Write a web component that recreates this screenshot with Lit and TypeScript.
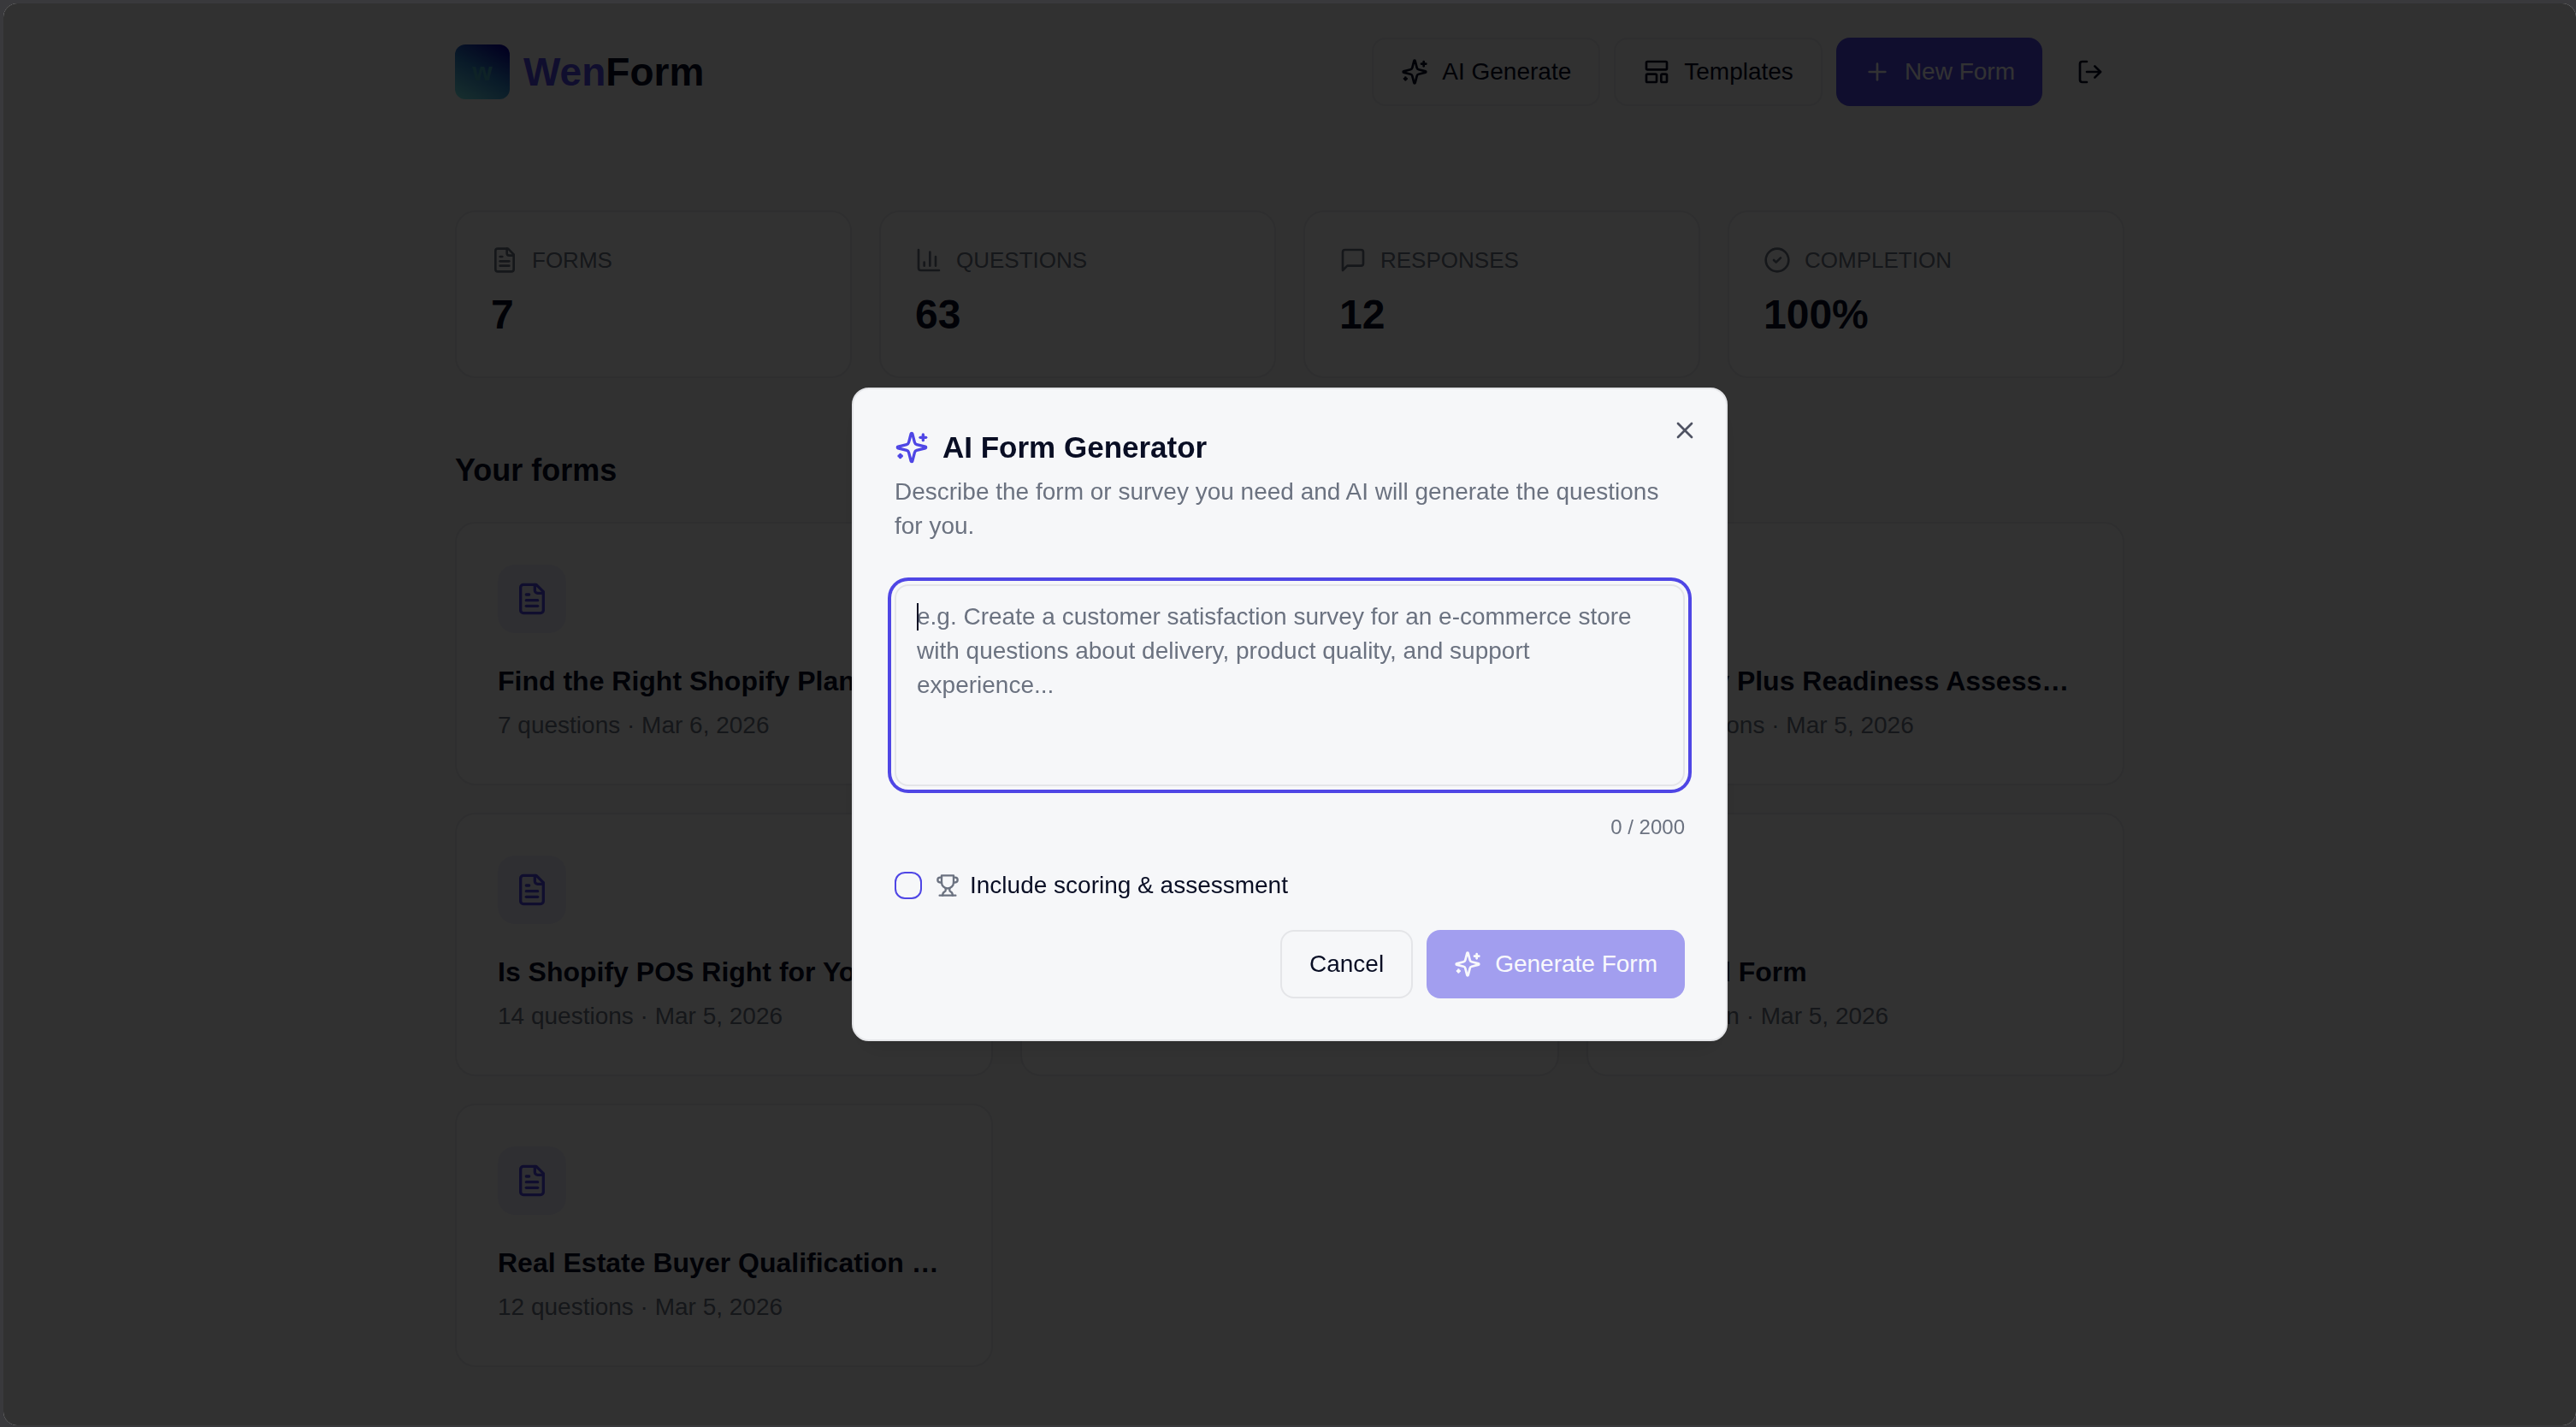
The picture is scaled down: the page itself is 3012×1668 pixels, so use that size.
import { LitElement, html, css, svg, nothing } from "lit";
import { customElement, state } from "lit/decorators.js";

const icons = {
  sparkles: svg`<path d="M9.937 15.5A2 2 0 0 0 8.5 14.063l-6.135-1.582a.5.5 0 0 1 0-.962L8.5 9.936A2 2 0 0 0 9.937 8.5l1.582-6.135a.5.5 0 0 1 .963 0L14.063 8.5A2 2 0 0 0 15.5 9.937l6.135 1.581a.5.5 0 0 1 0 .964L15.5 14.063a2 2 0 0 0-1.437 1.437l-1.582 6.135a.5.5 0 0 1-.963 0z"/><path d="M20 3v4"/><path d="M22 5h-4"/><path d="M4 17v2"/><path d="M5 18H3"/>`,
  template: svg`<rect width="18" height="7" x="3" y="3" rx="1"/><rect width="9" height="7" x="3" y="14" rx="1"/><rect width="5" height="7" x="16" y="14" rx="1"/>`,
  plus: svg`<path d="M5 12h14"/><path d="M12 5v14"/>`,
  logout: svg`<path d="M9 21H5a2 2 0 0 1-2-2V5a2 2 0 0 1 2-2h4"/><path d="m16 17 5-5-5-5"/><path d="M21 12H9"/>`,
  file: svg`<path d="M15 2H6a2 2 0 0 0-2 2v16a2 2 0 0 0 2 2h12a2 2 0 0 0 2-2V7Z"/><path d="M14 2v4a2 2 0 0 0 2 2h4"/><path d="M10 9H8"/><path d="M16 13H8"/><path d="M16 17H8"/>`,
  chart: svg`<path d="M3 3v16a2 2 0 0 0 2 2h16"/><path d="M18 17V9"/><path d="M13 17V5"/><path d="M8 17v-3"/>`,
  message: svg`<path d="M21 15a2 2 0 0 1-2 2H7l-4 4V5a2 2 0 0 1 2-2h14a2 2 0 0 1 2 2z"/>`,
  check: svg`<circle cx="12" cy="12" r="10"/><path d="m9 12 2 2 4-4"/>`,
  trophy: svg`<path d="M6 9H4.5a2.5 2.5 0 0 1 0-5H6"/><path d="M18 9h1.5a2.5 2.5 0 0 0 0-5H18"/><path d="M4 22h16"/><path d="M10 14.66V17c0 .55-.47.98-.97 1.21C7.85 18.75 7 20.24 7 22"/><path d="M14 14.66V17c0 .55.47.98.97 1.21C16.15 18.75 17 20.24 17 22"/><path d="M18 2H6v7a6 6 0 0 0 12 0V2Z"/>`,
  close: svg`<path d="M18 6 6 18"/><path d="m6 6 12 12"/>`,
};

type IconName = keyof typeof icons;

const icon = (name: IconName, size = "md") => html`
  <svg class="icon icon-${size}" viewBox="0 0 24 24" aria-hidden="true">${icons[name]}</svg>
`;

const stats: { icon: IconName; label: string; value: string }[] = [
  { icon: "file", label: "FORMS", value: "7" },
  { icon: "chart", label: "QUESTIONS", value: "63" },
  { icon: "message", label: "RESPONSES", value: "12" },
  { icon: "check", label: "COMPLETION", value: "100%" },
];

const forms: { title?: string; meta?: string }[] = [
  { title: "Find the Right Shopify Plan", meta: "7 questions · Mar 6, 2026" },
  {},
  { title: "Shopify Plus Readiness Assess…", meta: "14 questions · Mar 5, 2026" },
  { title: "Is Shopify POS Right for You?", meta: "14 questions · Mar 5, 2026" },
  {},
  { title: "Untitled Form", meta: "1 question · Mar 5, 2026" },
  { title: "Real Estate Buyer Qualification …", meta: "12 questions · Mar 5, 2026" },
];

const MAX_LENGTH = 2000;

@customElement("app-root")
export class AppRoot extends LitElement {
  @state() private prompt = "";

  static styles = css`
    :host {
      --background: #f6f7f9;
      --page: #f3f3f3;
      --foreground: #090e24;
      --card: #fbfbfb;
      --border: #e4e5e8;
      --muted: #6b7280;
      --primary: #4f46e5;
      display: block;
      box-sizing: border-box;
      min-height: 100vh;
      padding: 4px 0 2px 4px;
      background: #39393c;
      color: var(--foreground);
      font-family: "Liberation Sans", Arial, sans-serif;
      font-size: 28px;
      line-height: 40px;
    }
    *, *::before {
      box-sizing: border-box;
    }
    h1, h2, h3, p, dl, dt, dd, ul {
      margin: 0;
      padding: 0;
    }
    button, textarea {
      font: inherit;
      color: inherit;
      margin: 0;
    }
    .icon {
      display: block;
      flex: none;
      fill: none;
      stroke: currentColor;
      stroke-width: 2;
      stroke-linecap: round;
      stroke-linejoin: round;
    }
    .icon-sm { width: 28px; height: 28px; }
    .icon-md { width: 32px; height: 32px; }
    .icon-lg { width: 40px; height: 40px; }

    .page {
      min-height: calc(100vh - 6px);
      border-radius: 16px;
      background: var(--page);
    }
    .container {
      max-width: 2048px;
      margin: 0 auto;
      padding: 40px 48px 48px;
    }
    .header {
      display: flex;
      align-items: center;
      justify-content: space-between;
      margin-bottom: 122px;
    }
    .brand {
      display: flex;
      align-items: center;
      gap: 16px;
      color: inherit;
      text-decoration: none;
      font-size: 46px;
      font-weight: 700;
      line-height: 64px;
    }
    .brand-mark {
      display: grid;
      place-items: center;
      width: 64px;
      height: 64px;
      border-radius: 12px;
      background: linear-gradient(30deg, #78ebe6 0%, #2d82c8 50%, #0a00a0 95%);
      color: #46aabe;
      font-size: 30px;
      line-height: 64px;
    }
    .brand-accent { color: var(--primary); }
    .actions {
      display: flex;
      align-items: center;
      gap: 16px;
    }
    .btn {
      display: inline-flex;
      align-items: center;
      justify-content: center;
      gap: 16px;
      height: 80px;
      padding: 0 32px;
      border: 0;
      border-radius: 16px;
      background: transparent;
      white-space: nowrap;
    }
    .btn-outline { border: 2px solid var(--border); }
    .btn-primary {
      background: var(--primary);
      color: #fafaff;
    }
    .btn-primary:disabled { opacity: 0.5; }
    .btn-icon {
      width: 80px;
      padding: 0;
    }

    .stats {
      display: grid;
      grid-template-columns: repeat(4, 1fr);
      gap: 32px;
      margin-bottom: 80px;
    }
    .stat {
      padding: 40px;
      border: 2px solid var(--border);
      border-radius: 24px;
      background: var(--card);
    }
    .stat-label {
      display: flex;
      align-items: center;
      gap: 16px;
      margin-bottom: 16px;
      color: var(--muted);
      font-size: 26px;
      line-height: 32px;
    }
    .stat-value {
      font-size: 48px;
      font-weight: 700;
      line-height: 64px;
    }

    .section-title {
      margin-bottom: 32px;
      font-size: 36px;
      line-height: 56px;
    }
    .forms {
      display: grid;
      grid-template-columns: repeat(3, minmax(0, 1fr));
      gap: 32px;
      list-style: none;
    }
    .form-card {
      padding: 48px;
      border: 2px solid var(--border);
      border-radius: 24px;
      background: var(--card);
    }
    .form-tile {
      display: grid;
      place-items: center;
      width: 80px;
      height: 80px;
      margin-bottom: 32px;
      border-radius: 20px;
      background: #ebebf7;
      color: var(--primary);
    }
    .form-title {
      margin-bottom: 8px;
      overflow: hidden;
      font-size: 32px;
      line-height: 48px;
      text-overflow: ellipsis;
      white-space: nowrap;
    }
    .form-meta { color: var(--muted); }

    .overlay {
      position: fixed;
      inset: 4px 0 2px 4px;
      display: flex;
      align-items: center;
      justify-content: center;
      border-radius: 16px;
      background: rgba(0, 0, 0, 0.8);
    }
    .dialog {
      position: relative;
      display: grid;
      gap: 32px;
      width: 100%;
      max-width: 1024px;
      padding: 48px;
      border: 2px solid var(--border);
      border-radius: 20px;
      background: var(--background);
      box-shadow: 0 20px 30px -6px rgba(0, 0, 0, 0.1), 0 8px 12px -8px rgba(0, 0, 0, 0.1);
    }
    .dialog-head { margin-bottom: 16px; }
    .dialog-title {
      display: flex;
      align-items: center;
      gap: 16px;
      margin-bottom: 12px;
      font-size: 35px;
      line-height: 40px;
    }
    .dialog-title .icon { color: var(--primary); }
    .muted { color: var(--muted); }
    .close {
      position: absolute;
      top: 32px;
      right: 32px;
      padding: 0;
      border: 0;
      background: none;
      opacity: 0.7;
    }
    .field {
      position: relative;
      display: flex;
    }
    .field::before {
      content: "";
      position: absolute;
      top: 22px;
      left: 26px;
      width: 2px;
      height: 32px;
      background: var(--foreground);
    }
    .prompt {
      width: 100%;
      height: 236px;
      padding: 16px 24px;
      border: 2px solid var(--border);
      border-radius: 16px;
      outline: none;
      background: var(--background);
      box-shadow: 0 0 0 4px var(--background), 0 0 0 8px var(--primary);
      caret-color: transparent;
      resize: none;
    }
    .prompt::placeholder {
      color: var(--muted);
      opacity: 1;
    }
    .counter {
      color: var(--muted);
      font-size: 24px;
      line-height: 32px;
      text-align: right;
    }
    .option {
      display: flex;
      align-items: center;
    }
    .checkbox {
      appearance: none;
      width: 32px;
      height: 32px;
      margin: 0 16px 0 0;
      border: 2px solid var(--primary);
      border-radius: 12px;
    }
    .checkbox:checked { background: var(--primary); }
    .option-label {
      display: flex;
      align-items: center;
      gap: 12px;
    }
    .option-label .icon { color: var(--muted); }
    .dialog-actions {
      display: flex;
      justify-content: flex-end;
      gap: 16px;
    }
  `;

  private onInput(e: Event) {
    this.prompt = (e.target as HTMLTextAreaElement).value;
  }

  private renderDialog() {
    return html`
      <div class="overlay">
        <section class="dialog" role="dialog" aria-modal="true" aria-labelledby="dialog-title" aria-describedby="dialog-text">
          <div class="dialog-head">
            <h2 class="dialog-title" id="dialog-title">${icon("sparkles", "lg")}AI Form Generator</h2>
            <p class="muted" id="dialog-text">Describe the form or survey you need and AI will generate the questions for you.</p>
          </div>
          <div class="field">
            <textarea
              class="prompt"
              aria-labelledby="dialog-title"
              maxlength=${MAX_LENGTH}
              placeholder="e.g. Create a customer satisfaction survey for an e-commerce store with questions about delivery, product quality, and support experience..."
              .value=${this.prompt}
              @input=${this.onInput}
            ></textarea>
          </div>
          <div class="counter">${this.prompt.length} / ${MAX_LENGTH}</div>
          <div class="option">
            <input class="checkbox" id="scoring" type="checkbox" />
            <label class="option-label" for="scoring">${icon("trophy", "sm")}Include scoring &amp; assessment</label>
          </div>
          <div class="dialog-actions">
            <button class="btn btn-outline" type="button">Cancel</button>
            <button class="btn btn-primary" type="button" ?disabled=${!this.prompt}>${icon("sparkles")}Generate Form</button>
          </div>
          <button class="close" type="button" aria-label="Close">${icon("close")}</button>
        </section>
      </div>
    `;
  }

  render() {
    return html`
      <div class="page">
        <div class="container">
          <header class="header">
            <a class="brand" href="#">
              <span class="brand-mark" aria-hidden="true">w</span>
              <span><span class="brand-accent">Wen</span>Form</span>
            </a>
            <nav class="actions">
              <button class="btn btn-outline" type="button">${icon("sparkles")}AI Generate</button>
              <button class="btn btn-outline" type="button">${icon("template")}Templates</button>
              <button class="btn btn-primary" type="button">${icon("plus")}New Form</button>
              <button class="btn btn-icon" type="button" aria-label="Log out">${icon("logout")}</button>
            </nav>
          </header>
          <main>
            <dl class="stats">
              ${stats.map(
                (s) => html`
                  <div class="stat">
                    <dt class="stat-label">${icon(s.icon)}${s.label}</dt>
                    <dd class="stat-value">${s.value}</dd>
                  </div>
                `
              )}
            </dl>
            <h2 class="section-title">Your forms</h2>
            <ul class="forms">
              ${forms.map(
                (f) => html`
                  <li class="form-card">
                    <div class="form-tile">${icon("file", "lg")}</div>
                    ${f.title ? html`<h3 class="form-title">${f.title}</h3>` : nothing}
                    ${f.meta ? html`<p class="form-meta">${f.meta}</p>` : nothing}
                  </li>
                `
              )}
            </ul>
          </main>
        </div>
      </div>
      ${this.renderDialog()}
    `;
  }
}
